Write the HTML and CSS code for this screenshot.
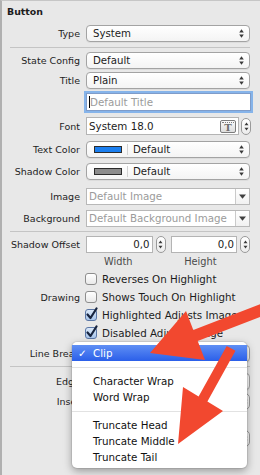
FILE: index.html
```html
<!DOCTYPE html>
<html>
<head>
<meta charset="utf-8">
<link rel="stylesheet" href="styles.css">
</head>
<body>
<div class="panel">
  <div class="hdr">Button</div>

  <div class="row mt2">
    <span class="lbl">Type</span>
    <div class="popup"><span class="val">System</span><svg class="ud" width="5" height="9" viewBox="0 0 5 9"><path d="M2.5 0.3L4.8 3.4H0.2Z M2.5 8.7L4.8 5.6H0.2Z"/></svg></div>
  </div>
  <div class="sep"></div>
  <div class="row">
    <span class="lbl">State Config</span>
    <div class="popup"><span class="val">Default</span><svg class="ud" width="5" height="9" viewBox="0 0 5 9"><path d="M2.5 0.3L4.8 3.4H0.2Z M2.5 8.7L4.8 5.6H0.2Z"/></svg></div>
  </div>
  <div class="row mt3">
    <span class="lbl">Title</span>
    <div class="popup"><span class="val">Plain</span><svg class="ud" width="5" height="9" viewBox="0 0 5 9"><path d="M2.5 0.3L4.8 3.4H0.2Z M2.5 8.7L4.8 5.6H0.2Z"/></svg></div>
  </div>
  <div class="row mt4 h18">
    <span></span>
    <div class="tfield focus"><span class="caret"></span><span class="ph">Default Title</span></div>
  </div>
  <div class="row mt6 h18">
    <span class="lbl">Font</span>
    <div class="fontctl">
      <div class="tfield font"><span class="val">System 18.0</span>
        <span class="ticon"><span class="tdots"></span><span class="tletter">T</span></span>
      </div>
      <div class="stepper"><svg width="5" height="11" viewBox="0 0 5 11"><path d="M2.5 1.5L4.5 4.3H0.5Z M2.5 9.5L4.5 6.7H0.5Z"/></svg></div>
    </div>
  </div>
  <div class="row mt6">
    <span class="lbl">Text Color</span>
    <div class="popup"><span class="swatch blue"></span><span class="vsep"></span><span class="val">Default</span><svg class="ud" width="5" height="9" viewBox="0 0 5 9"><path d="M2.5 0.3L4.8 3.4H0.2Z M2.5 8.7L4.8 5.6H0.2Z"/></svg></div>
  </div>
  <div class="row mt5">
    <span class="lbl">Shadow Color</span>
    <div class="popup"><span class="swatch grey"></span><span class="vsep"></span><span class="val">Default</span><svg class="ud" width="5" height="9" viewBox="0 0 5 9"><path d="M2.5 0.3L4.8 3.4H0.2Z M2.5 8.7L4.8 5.6H0.2Z"/></svg></div>
  </div>
  <div class="row mt8">
    <span class="lbl">Image</span>
    <div class="combo"><span class="ph">Default Image</span><span class="cbtn"><svg width="7" height="5" viewBox="0 0 7 5"><path d="M0 0.5H7L3.5 4.8Z"/></svg></span></div>
  </div>
  <div class="row mt5">
    <span class="lbl">Background</span>
    <div class="combo"><span class="ph">Default Background Image</span><span class="cbtn"><svg width="7" height="5" viewBox="0 0 7 5"><path d="M0 0.5H7L3.5 4.8Z"/></svg></span></div>
  </div>
  <div class="sep sep2"></div>
  <div class="row">
    <span class="lbl">Shadow Offset</span>
    <div class="pair">
      <div class="num">0,0</div>
      <div class="stepper"><svg width="5" height="11" viewBox="0 0 5 11"><path d="M2.5 1.5L4.5 4.3H0.5Z M2.5 9.5L4.5 6.7H0.5Z"/></svg></div>
      <div class="num">0,0</div>
      <div class="stepper"><svg width="5" height="11" viewBox="0 0 5 11"><path d="M2.5 1.5L4.5 4.3H0.5Z M2.5 9.5L4.5 6.7H0.5Z"/></svg></div>
    </div>
  </div>
  <div class="row sub">
    <span></span>
    <div class="pair">
      <div class="cap">Width</div><div class="capgap"></div>
      <div class="cap">Height</div><div class="capgap"></div>
    </div>
  </div>
  <div class="row ck mt2">
    <span></span>
    <div class="cb"><span class="box"></span>Reverses On Highlight</div>
  </div>
  <div class="row ck">
    <span class="lbl">Drawing</span>
    <div class="cb"><span class="box"></span>Shows Touch On Highlight</div>
  </div>
  <div class="row ck h17">
    <span></span>
    <div class="cb"><span class="box on"><svg class="tick" width="14" height="14" viewBox="0 0 14 14"><path d="M2.5 7.5L5.5 11L11.5 1.5"/></svg></span>Highlighted Adjusts Image</div>
  </div>
  <div class="row ck">
    <span></span>
    <div class="cb"><span class="box on"><svg class="tick" width="14" height="14" viewBox="0 0 14 14"><path d="M2.5 7.5L5.5 11L11.5 1.5"/></svg></span>Disabled Adjusts Image</div>
  </div>
  <div class="row mt3">
    <span class="lbl">Line Break</span>
    <div class="popup"><span class="val"></span><svg class="ud" width="5" height="9" viewBox="0 0 5 9"><path d="M2.5 0.3L4.8 3.4H0.2Z M2.5 8.7L4.8 5.6H0.2Z"/></svg></div>
  </div>
  <div class="sep sep3"></div>
  <div class="row">
    <span class="lbl">Edge</span>
    <div class="popup"><span class="val"></span><svg class="ud" width="5" height="9" viewBox="0 0 5 9"><path d="M2.5 0.3L4.8 3.4H0.2Z M2.5 8.7L4.8 5.6H0.2Z"/></svg></div>
  </div>
  <div class="row mt3">
    <span class="lbl">Inset</span>
    <div class="pair">
      <div class="num"></div>
      <div class="stepper"><svg width="5" height="11" viewBox="0 0 5 11"><path d="M2.5 1.5L4.5 4.3H0.5Z M2.5 9.5L4.5 6.7H0.5Z"/></svg></div>
      <div class="num"></div>
      <div class="stepper"><svg width="5" height="11" viewBox="0 0 5 11"><path d="M2.5 1.5L4.5 4.3H0.5Z M2.5 9.5L4.5 6.7H0.5Z"/></svg></div>
    </div>
  </div>
  <div class="row sub2"></div>
  <div class="row h19">
    <span></span>
    <div class="pair">
      <div class="num"></div>
      <div class="stepper"><svg width="5" height="11" viewBox="0 0 5 11"><path d="M2.5 1.5L4.5 4.3H0.5Z M2.5 9.5L4.5 6.7H0.5Z"/></svg></div>
      <div class="num"></div>
      <div class="stepper"><svg width="5" height="11" viewBox="0 0 5 11"><path d="M2.5 1.5L4.5 4.3H0.5Z M2.5 9.5L4.5 6.7H0.5Z"/></svg></div>
    </div>
  </div>
</div>

<div class="menu">
  <div class="mi sel"><span class="chk">✓</span>Clip</div>
  <div class="msep"></div>
  <div class="mi">Character Wrap</div>
  <div class="mi">Word Wrap</div>
  <div class="msep"></div>
  <div class="mi">Truncate Head</div>
  <div class="mi">Truncate Middle</div>
  <div class="mi">Truncate Tail</div>
</div>

<svg class="arrows" width="260" height="475" viewBox="0 0 260 475">
  <polygon points="150,353 186,311 193.3,329.9 265,302.3 265,315.2 197.7,341.1 205,360"/>
  <polygon points="178,444 183,387 198.6,396.6 226.7,345.9 235.5,350.7 207.4,401.4 223,411"/>
</svg>
</body>
</html>
```

FILE: styles.css
```css
* { box-sizing: border-box; margin: 0; padding: 0; }
html, body { width: 260px; height: 475px; overflow: hidden; }
body {
  background: #e8e8e8;
  font-family: "DejaVu Sans", Verdana, sans-serif;
  color: #1c1c1c;
  position: relative;
}
.panel {
  height: 475px;
  border-left: 2px solid #b0b0b0;
  border-top: 1px solid #c6c6c6;
  padding-right: 10px;
}
.hdr {
  height: 22px;
  line-height: 22px;
  padding-left: 5px;
  font-weight: bold;
  font-size: 9.4px;
}
.row {
  display: grid;
  grid-template-columns: 78px 164px;
  column-gap: 6px;
  align-items: center;
  height: 17px;
}
.h17 { height: 17px; }
.h18 { height: 18px; }
.h19 { height: 19px; }
.mt2 { margin-top: 2px; }
.mt3 { margin-top: 3px; }
.mt4 { margin-top: 4px; }
.mt5 { margin-top: 5px; }
.mt6 { margin-top: 6px; }
.mt8 { margin-top: 8px; }
.lbl {
  text-align: right;
  font-size: 9.5px;
  white-space: nowrap;
  color: #1e1e1e;
}
.sep {
  height: 1px;
  background: #c4c4c4;
  margin: 5px 0 4px 8px;
}
.sep2 { margin: 4px 0 4px 8px; }
.sep3 { margin: 4px 0 6px 8px; }

.popup {
  height: 17px;
  border: 1px solid #a3a3a3;
  border-radius: 4px;
  background: linear-gradient(#ffffff, #f4f4f4);
  box-shadow: 0 1px 0 rgba(0,0,0,0.05);
  display: flex;
  align-items: center;
  padding: 0 5px 0 6px;
  font-size: 10.2px;
  white-space: nowrap;
}
.popup .val { flex: 1; }
.ud { fill: #3a3a3a; flex: none; }

.tfield {
  height: 18px;
  background: #fff;
  border: 1px solid #b4b4b4;
  display: flex;
  align-items: center;
  font-size: 10.3px;
  white-space: nowrap;
}
.tfield.focus {
  border-color: #7f9cc9;
  box-shadow: 0 0 0 2px #86b4ea;
  padding-left: 2px;
  margin-right: -1px;
}
.caret {
  width: 1px;
  height: 12px;
  background: #000;
}
.ph { color: #9b9b9b; font-size: 10.3px; }

.fontctl {
  display: flex;
  align-items: center;
  gap: 2px;
  height: 18px;
  margin-right: -1px;
}
.tfield.font { flex: 1; padding-left: 2px; }
.tfield.font .val { flex: 1; }
.ticon {
  width: 16px;
  height: 13px;
  margin-right: 2px;
  border: 1px solid #7c7c7c;
  border-radius: 2px;
  background: linear-gradient(#fafafa, #dedede);
  display: flex;
  flex-direction: column;
  align-items: center;
}
.tdots {
  width: 12px;
  height: 0;
  border-top: 1px dotted #808080;
  margin-top: 1px;
}
.tletter {
  font-family: "DejaVu Serif", "Liberation Serif", serif;
  font-weight: bold;
  font-size: 10px;
  line-height: 9px;
  color: #707070;
}
.stepper {
  width: 10px;
  height: 17px;
  flex: none;
  border: 1px solid #9a9a9a;
  border-radius: 5px;
  background: linear-gradient(#ffffff, #ececec);
  display: flex;
  align-items: center;
  justify-content: center;
}
.stepper svg { fill: #3a3a3a; }

.swatch {
  width: 28px;
  height: 7px;
  border: 1px solid #2c2c2c;
  flex: none;
  margin-left: 1px;
}
.swatch.blue { background: #1b7ff0; }
.swatch.grey { background: #8c8c8c; }
.vsep {
  width: 1px;
  height: 11px;
  background: #d2d2d2;
  margin: 0 5px;
  flex: none;
}

.combo {
  height: 17px;
  display: flex;
  background: #fff;
  border: 1px solid #b8b8b8;
  white-space: nowrap;
  overflow: hidden;
}
.combo .ph { flex: 1; padding-left: 2px; line-height: 15px; overflow: hidden; }
.cbtn {
  width: 14px;
  border-left: 1px solid #cacaca;
  background: linear-gradient(#ffffff, #f1f1f1);
  display: flex;
  align-items: center;
  justify-content: center;
}
.cbtn svg { fill: #404040; }

.pair {
  display: flex;
  align-items: center;
  height: 17px;
}
.num {
  width: 67px;
  height: 17px;
  background: #fff;
  border: 1px solid #b4b4b4;
  text-align: right;
  padding-right: 2px;
  font-size: 10.2px;
  line-height: 15px;
}
.pair .stepper { margin-left: 3px; }
.pair .stepper + .num { margin-left: 5px; }
.row.sub { height: 15px; }
.row.sub2 { height: 19px; }
.cap {
  width: 67px;
  text-align: center;
  font-size: 9.8px;
  color: #4a4a4a;
}
.capgap { width: 18px; }

.row.ck { height: 18px; }
.cb {
  display: flex;
  align-items: center;
  font-size: 10.3px;
  white-space: nowrap;
  margin-left: -1px;
}
.box {
  width: 12px;
  height: 12px;
  border: 1px solid #8d8d8d;
  border-radius: 3px;
  background: linear-gradient(#ffffff, #e9e9e9);
  margin-right: 5px;
  position: relative;
  flex: none;
}
.box.on {
  border-color: #5b77a6;
  background: linear-gradient(#dbe8f8, #a7c5ec);
}
.tick {
  position: absolute;
  left: -1px;
  top: -3px;
  fill: none;
  stroke: #17243f;
  stroke-width: 2.2;
  stroke-linecap: round;
  stroke-linejoin: round;
}

.menu {
  position: absolute;
  left: 72px;
  top: 342px;
  width: 175px;
  height: 126px;
  background: #fff;
  border-radius: 5px;
  box-shadow: 0 3px 9px rgba(0,0,0,0.35), 0 0 0 1px rgba(0,0,0,0.07);
  padding: 3px 0;
  font-size: 10.3px;
  color: #111;
}
.mi {
  height: 16px;
  line-height: 16px;
  padding-left: 21px;
  position: relative;
  white-space: nowrap;
}
.mi.sel {
  background: linear-gradient(#5f8ff4, #2b5fe9);
  color: #fff;
}
.chk {
  position: absolute;
  left: 6px;
  top: 0;
}
.msep {
  height: 12px;
  display: flex;
  align-items: center;
}
.msep::after {
  content: "";
  flex: 1;
  height: 1px;
  background: #e2e2e2;
}

.arrows {
  position: absolute;
  left: 0;
  top: 0;
  pointer-events: none;
  fill: #f2482f;
}
```
